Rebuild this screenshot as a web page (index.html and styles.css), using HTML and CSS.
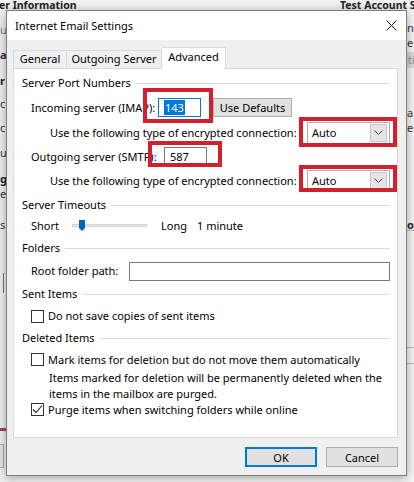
FILE: index.html
```html
<!DOCTYPE html>
<html lang="en">
<head>
<meta charset="utf-8">
<title>Internet Email Settings</title>
<link rel="stylesheet" href="styles.css">
</head>
<body>
<div class="app">
  <div class="app-head">
    <span class="app-title">er Information</span>
    <span class="app-title second">Test Account S</span>
  </div>
  <div class="app-cols">
    <div class="app-left">
      <span class="frag f1 link">u</span>
      <span class="frag f2 strong purple">a</span>
      <span class="frag f3 strong">r</span>
      <span class="frag f4">c</span>
      <span class="frag f5">c</span>
      <span class="frag f6">u</span>
      <span class="frag f7 strong under">g</span>
      <span class="frag f8">e</span>
      <span class="frag f9">s</span>
      <span class="tick"></span>
      <span class="marks"></span>
      <span class="small-box"></span>
    </div>
    <div class="app-right">
      <span class="frag r1">n</span>
      <span class="frag r2">e</span>
      <span class="gray-btn">ti</span>
      <span class="frag r3">a</span>
      <span class="frag r4">e</span>
      <span class="frag r5 strong">o</span>
      <span class="rule r6"></span>
      <span class="rule r7"></span>
      <span class="rule r8"></span>
    </div>
  </div>
</div>

<section class="dialog">
  <header class="titlebar">
    <span class="title">Internet Email Settings</span>
    <svg class="close" width="11" height="11" viewBox="0 0 11 11"><path d="M0.5 0.5L10.5 10.5M10.5 0.5L0.5 10.5" stroke="#111" stroke-width="1" fill="none"/></svg>
  </header>
  <div class="dlg-body">
    <div class="tabs">
      <div class="tab t-general">General</div>
      <div class="tab t-out">Outgoing Server</div>
      <div class="tab t-adv active">Advanced</div>
    </div>
    <div class="panel">
      <div class="row h24"><span class="group">Server Port Numbers</span><span class="group-line"></span></div>
      <div class="row h25 ind1">
        <span class="lbl w-in">Incoming server (IMAP):</span>
        <span class="port focus"><span class="sel">143</span></span>
        <span class="btn small">Use Defaults</span>
      </div>
      <div class="row h25 ind2">
        <span class="lbl w-enc">Use the following type of encrypted connection:</span>
        <span class="combo"><span class="combo-val">Auto</span><span class="combo-arrow"><svg width="9" height="5" viewBox="0 0 9 5"><path d="M0.5 0.5L4.5 4.5L8.5 0.5" stroke="#444" fill="none"/></svg></span></span>
      </div>
      <div class="row h23 ind1">
        <span class="lbl w-out">Outgoing server (SMTP):</span>
        <span class="port"><span class="val">587</span></span>
      </div>
      <div class="row h25 ind2">
        <span class="lbl w-enc">Use the following type of encrypted connection:</span>
        <span class="combo"><span class="combo-val">Auto</span><span class="combo-arrow"><svg width="9" height="5" viewBox="0 0 9 5"><path d="M0.5 0.5L4.5 4.5L8.5 0.5" stroke="#444" fill="none"/></svg></span></span>
      </div>
      <div class="row h23"><span class="group">Server Timeouts</span><span class="group-line"></span></div>
      <div class="row h20 ind1">
        <span class="lbl w-short">Short</span>
        <span class="slider">
          <span class="track"></span>
          <svg class="thumb" width="6" height="11" viewBox="0 0 6 11"><path d="M0 0H6V8L3 11L0 8Z" fill="#0063b1"/></svg>
        </span>
        <span class="lbl w-long">Long</span>
        <span class="lbl">1 minute</span>
      </div>
      <div class="row h23"><span class="group">Folders</span><span class="group-line"></span></div>
      <div class="row h24 ind1">
        <span class="lbl w-root">Root folder path:</span>
        <span class="path-box"></span>
      </div>
      <div class="row h22"><span class="group">Sent Items</span><span class="group-line"></span></div>
      <div class="row h22 ind1">
        <span class="check"></span>
        <span class="lbl">Do not save copies of sent items</span>
      </div>
      <div class="row h22"><span class="group">Deleted Items</span><span class="group-line"></span></div>
      <div class="row h21 ind1">
        <span class="check"></span>
        <span class="lbl">Mark items for deletion but do not move them automatically</span>
      </div>
      <div class="note">Items marked for deletion will be permanently deleted when the<br>items in the mailbox are purged.</div>
      <div class="row h15 ind1">
        <span class="check checked"><svg width="11" height="11" viewBox="0 0 11 11"><path d="M1 5.5L4 8.5L10 1.5" stroke="#222" stroke-width="1.1" fill="none"/></svg></span>
        <span class="lbl">Purge items when switching folders while online</span>
      </div>
    </div>
    <div class="actions">
      <span class="btn action default">OK</span>
      <span class="btn action">Cancel</span>
    </div>
  </div>
</section>

<!-- red callout frames drawn over the form -->
<span class="callout c1"></span>
<span class="callout c2"></span>
<span class="callout c3"></span>
<span class="callout c4"></span>
</body>
</html>
```

FILE: styles.css
```css
* { box-sizing: border-box; }

body {
  margin: 0;
  width: 414px;
  height: 482px;
  overflow: hidden;
  position: relative;
  background: #e9e9e9;
  font-family: "Noto Sans", "Open Sans", sans-serif;
  font-size: 11px;
  color: #000;
}

/* ---------- window underneath ---------- */
.app { height: 482px; display: flex; flex-direction: column; }
.app-head {
  height: 10px;
  display: flex;
  overflow: hidden;
  background: #f2f2f2;
}
.app-title {
  font-weight: bold;
  font-size: 10.5px;
  line-height: 10px;
  color: #222;
  margin-left: -1px;
  white-space: nowrap;
}
.app-title.second { margin-left: auto; width: 74px; overflow: hidden; }
.app-cols { flex: 1; display: flex; justify-content: space-between; background: #f4f4f4; }
.app-left, .app-right { position: relative; width: 14px; overflow: hidden; }
.app-left { background: #f1f1f1; }
.app-right { background: #f6f6f6; }
.frag { position: absolute; left: 0; font-size: 11px; line-height: 11px; color: #333; }
.app-right .frag { left: 7px; }
.strong { font-weight: bold; color: #222; }
.purple { color: #3d2b56; }
.link { color: #5b7a9a; }
.under { text-decoration: underline; }
.f1 { top: 14px; } .f2 { top: 39px; } .f3 { top: 65px; } .f4 { top: 88px; }
.f5 { top: 112px; } .f6 { top: 137px; } .f7 { top: 163px; } .f8 { top: 178px; } .f9 { top: 209px; }
.tick { position: absolute; left: 3px; top: 263px; width: 1px; height: 20px; background: #777; }
.marks { position: absolute; left: 0; top: 418px; width: 14px; height: 3px; border-top: 2px solid #d33; border-bottom: 1px solid #36c; }
.small-box { position: absolute; left: -4px; top: 434px; width: 8px; height: 24px; border: 1px solid #aaa; background: #e6e6e6; }
.r1 { top: 12px; } .r2 { top: 27px; } .r3 { top: 97px; } .r4 { top: 112px; } .r5 { top: 209px; }
.gray-btn { position: absolute; left: 7px; top: 42px; width: 20px; height: 16px; background: #d9d9d9; color: #999; font-size: 11px; line-height: 16px; padding-left: 1px; }
.rule { position: absolute; left: 7px; width: 10px; height: 1px; background: #bbb; }
.r6 { top: 220px; } .r7 { top: 337px; } .r8 { top: 353px; }

/* ---------- dialog ---------- */
.dialog {
  position: absolute;
  left: 6px;
  top: 10px;
  width: 401px;
  height: 466px;
  border: 1px solid #7d7d7d;
  background: #f0f0f0;
  box-shadow: 0 2px 10px rgba(0, 0, 0, 0.35);
  display: flex;
  flex-direction: column;
}
.titlebar {
  height: 29px;
  background: #fff;
  display: flex;
  align-items: center;
  justify-content: space-between;
  padding: 0 9px 0 8px;
}
.title { font-size: 11px; }
.close { display: block; margin-top: -1px; }

.dlg-body { flex: 1; display: flex; flex-direction: column; padding: 7px 8px 8px 6px; }

.tabs { height: 21px; display: flex; align-items: flex-end; position: relative; z-index: 1; }
.tab {
  height: 18px;
  border: 1px solid #d9d9d9;
  border-bottom: none;
  background: #f0f0f0;
  display: flex;
  align-items: center;
  justify-content: center;
  line-height: 16px;
  padding-bottom: 1px;
}
.t-general { width: 53px; border-right: none; }
.t-out { width: 96px; }
.t-adv { width: 64px; }
.tab.active {
  height: 22px;
  margin-bottom: -1px;
  background: #fff;
  border-left: none;
  padding-bottom: 3px;
}

.panel {
  height: 370px;
  background: #fff;
  border: 1px solid #d9d9d9;
  padding: 2px 7px 0 8px;
  display: flex;
  flex-direction: column;
}
.row { display: flex; align-items: center; line-height: 16px; white-space: nowrap; }
.h15 { height: 15px; } .h20 { height: 20px; } .h21 { height: 21px; } .h22 { height: 22px; }
.h23 { height: 23px; } .h24 { height: 24px; } .h25 { height: 25px; }
.ind1 { padding-left: 9px; }
.ind2 { padding-left: 28px; }

.group-line { flex: 1; height: 1px; background: #dcdcdc; margin-left: 5px; margin-top: 1px; }

.lbl { flex: none; }
.w-in { width: 127px; }
.w-out { width: 133px; }
.w-enc { width: 257px; }
.w-root { width: 98px; }
.w-short { width: 41px; }
.w-long { width: 36px; }

.port {
  width: 43px;
  height: 19px;
  border: 1px solid #7a7a7a;
  background: #fff;
  display: flex;
  align-items: center;
  padding-left: 5px;
}
.port.focus { border-color: #0078d7; }
.sel { background: #0078d7; color: #fff; line-height: 15px; padding: 0 1px; }
.row .port + .btn { margin-left: 12px; }

.btn {
  display: flex;
  align-items: center;
  justify-content: center;
  background: #e1e1e1;
  border: 1px solid #adadad;
}
.btn.small { width: 79px; height: 19px; }

.combo {
  width: 84px;
  height: 22px;
  border: 1px solid #adadad;
  background: #fff;
  box-shadow: inset 0 0 0 1px #fff;
  display: flex;
  align-items: center;
  justify-content: space-between;
  padding: 1px 2px 1px 4px;
}
.combo-arrow {
  width: 17px;
  height: 18px;
  background: #e5e5e5;
  border: 1px solid #c7c7c7;
  display: flex;
  align-items: center;
  justify-content: center;
}
.combo-arrow svg { display: block; }

.slider { position: relative; width: 75px; height: 12px; margin-right: 14px; }
.track { position: absolute; left: 0; right: 0; top: 4px; height: 3px; background: #e7e7e7; border: 1px solid #d6d6d6; }
.thumb { position: absolute; left: 7px; top: 0; }

.path-box { width: 261px; height: 19px; border: 1px solid #7a7a7a; background: #fff; }

.check {
  width: 13px;
  height: 13px;
  border: 1px solid #333;
  background: #fff;
  margin-right: 4px;
  flex: none;
  display: flex;
  align-items: center;
  justify-content: center;
}
.check svg { display: block; }

.note { padding-left: 27px; line-height: 16px; height: 32px; white-space: nowrap; }

.actions { display: flex; justify-content: flex-end; gap: 9px; margin-top: 9px; }
.btn.action { width: 72px; height: 20px; }
.btn.default { border: 2px solid #0078d7; }

/* red callout frames */
.callout { position: absolute; border: 4px solid #d3202e; }
.c1 { left: 143px; top: 88px; width: 70px; height: 35px; }
.c2 { left: 299px; top: 117px; width: 98px; height: 30px; }
.c3 { left: 148px; top: 141px; width: 74px; height: 26px; }
.c4 { left: 299px; top: 165px; width: 98px; height: 27px; }
```
